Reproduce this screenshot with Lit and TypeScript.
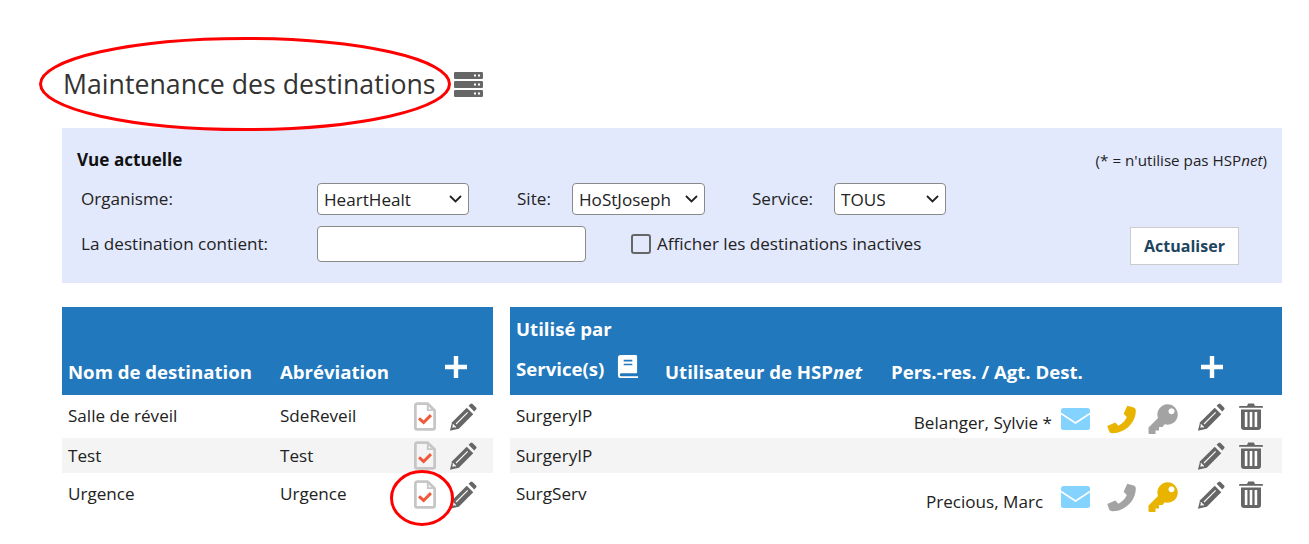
import { LitElement, html, css, svg } from "lit";
import { customElement } from "lit/decorators.js";

const gray = "#666666";
const lite = "#a3a3a3";
const gold = "#e8b400";

const pencil = html`<svg class="ic pencil" viewBox="0 0 30 30">
  <path fill="${gray}" d="M21 3l2-2a1.6 1.6 0 0 1 2.2 0l3.8 3.8a1.6 1.6 0 0 1 0 2.2l-2 2z"/>
  <path fill="${gray}" d="M19 5l7 7L10.500 27.500 1 29.800 3.300 20.500z"/>
  <path stroke="#fff" stroke-width="1.200" fill="none" d="M7.500 22.500L20 10M4 23l3.200 3.200"/>
  <path fill="#fff" d="M4.300 23.200l2.600 2.600-3.400.8z"/>
</svg>`;
const trash = html`<svg class="ic trash" viewBox="0 0 24 27">
  <path fill="${gray}" d="M8 3l1.200-2.400h5.600L16 3h7a1 1 0 0 1 1 1v.8H0V4a1 1 0 0 1 1-1z"/>
  <path fill="${gray}" d="M2 6.500h20V24a3 3 0 0 1-3 3H5a3 3 0 0 1-3-3z"/>
  <path fill="#fff" d="M5.800 9h2.600v15H5.800zM10.700 9h2.600v15h-2.600zM15.600 9h2.600v15h-2.600z"/>
</svg>`;
const mail = html`<svg class="ic mail" viewBox="0 0 29 22">
  <rect width="29" height="22" rx="2.500" fill="#84d3ff"/>
  <path d="M0 5.500L14.500 15 29 5.500" fill="none" stroke="#fff" stroke-width="1.500"/>
</svg>`;
const phone = (c: string) => html`<svg class="ic phone" viewBox="0 0 30 30">
  <path fill="${c}" d="M21 .8l6.500 1.700c1.500.4 2.300 1.700 2.300 3.300C29.800 18.500 18.800 29.200 6 29.200c-2 0-3.400-.6-3.900-2.200L.3 21.800 8.500 18l3.300 3.400c4-1.900 7-5 8.700-9L17.200 9z"/>
</svg>`;
const key = (c: string) => html`<svg class="ic key" viewBox="0 0 30 30">
  <path fill="${c}" fill-rule="evenodd" d="M19.500.3a10.200 10.200 0 1 1-2.800 20L14.500 23H11v3.500H7.500V30H1.500a1 1 0 0 1-1-1v-5.500L10 14A10.200 10.200 0 0 1 19.500.3zM23.500 4.200a3 3 0 1 0 .01 0z"/>
</svg>`;
const doc = html`<svg class="ic doc" viewBox="0 0 24 31">
  <path fill="none" stroke="#c6c6c6" stroke-width="3" stroke-linejoin="round" d="M3.500 1.500h11.500l7.500 7.500v18.500a2 2 0 0 1-2 2h-17a2 2 0 0 1-2-2v-24a2 2 0 0 1 2-2z"/>
  <path fill="#c6c6c6" d="M14 1.500h2v6h6v2h-8z"/>
  <path fill="none" stroke="#f0583a" stroke-width="3.200" d="M5.500 17.500l5 4.500 8-8"/>
</svg>`;
const server = html`<svg class="server" viewBox="0 0 29 25">
  ${[0, 9, 18].map(
    (y) => svg`<rect y="${y}" width="29" height="7" rx="1.200" fill="${gray}"/>
    <rect x="20" y="${y + 2.5}" width="2" height="2" fill="#fff"/><rect x="24" y="${y + 2.5}" width="2" height="2" fill="#fff"/>`
  )}
</svg>`;
const book = html`<svg class="book" viewBox="0 0 21 24">
  <path fill="#fff" d="M3 0h15.500a1.500 1.500 0 0 1 1.500 1.500V18a1 1 0 0 1-1 1H3.500a1.600 1.600 0 0 0 0 3.200H21V24H3a3 3 0 0 1-3-3V3a3 3 0 0 1 3-3z"/>
  <path fill="#2178bc" d="M6 5h9v1.800H6zM6 9h9v1.800H6z"/>
</svg>`;
const chev = html`<svg class="chev" viewBox="0 0 13 8"><path d="M1 1l5.500 5.500L12 1" fill="none" stroke="#222" stroke-width="1.800"/></svg>`;

@customElement("app-root")
export class AppRoot extends LitElement {
  static styles = css`
    :host {
      display: block;
      position: relative;
      width: 1309px;
      height: 544px;
      overflow: hidden;
      background: #fff;
      font-family: "Open Sans", sans-serif;
      font-size: 17.100px;
      color: #222;
      box-sizing: border-box;
      padding: 62px 27px 0 62px;
    }
    .title {
      display: flex;
      align-items: center;
      height: 45px;
      margin: 0 0 21px 1px;
    }
    h1 {
      margin: -1px 0 0;
      font-size: 26.700px;
      font-weight: 400;
      color: #333;
      line-height: 44px;
    }
    .server { width: 29px; height: 25px; margin: -1px 0 0 18px; }
    .panel {
      background: #e3e9fd;
      height: 155px;
      box-sizing: border-box;
      padding: 20px 15px 0;
      margin-bottom: 24px;
    }
    .head {
      display: flex;
      justify-content: space-between;
      align-items: center;
      height: 23px;
      margin-bottom: 12px;
    }
    .head b { font-size: 17.100px; color: #111; }
    .note { font-size: 15.200px; color: #222; }
    .row { display: flex; align-items: center; padding-left: 4px; }
    .r1 { height: 32px; margin-bottom: 11px; }
    .r2 { height: 36px; }
    .lab0 { width: 236px; margin-top: -1px; }
    .site { margin-left: 48px; width: 55px; margin-top: -1px; }
    .svc { margin-left: 47px; width: 82px; margin-top: -1px; }
    .sel { position: relative; display: block; height: 32px; flex: none; }
    .chev { position: absolute; right: 7px; top: 12px; width: 13px; height: 8px; }
    select {
      appearance: none;
      display: block;
      width: 100%;
      font: inherit;
      height: 32px;
      background: #fff;
      color: #222;
      border: 1px solid #8a8a8a;
      border-radius: 4px;
      padding: 0 6px;
      box-sizing: border-box;
    }
    .s1 { width: 152px; }
    .s2 { width: 133px; }
    .s3 { width: 112px; }
    .txt {
      width: 269px;
      height: 36px;
      box-sizing: border-box;
      background: #fff;
      border: 1px solid #8a8a8a;
      border-radius: 4px;
      padding: 0;
      margin: 0;
    }
    .chk {
      appearance: none;
      width: 20px;
      height: 20px;
      margin: 0 6px 0 45px;
      box-sizing: border-box;
      border: 2px solid #666;
      border-radius: 3px;
      background: transparent;
      flex: none;
    }
    .chklab { margin-top: -1px; }
    .btn {
      align-self: flex-start;
      margin: 1px 28px 0 auto;
      width: 109px;
      height: 38px;
      box-sizing: border-box;
      background: #fff;
      border: 1px solid #ccc;
      font: inherit;
      font-size: 16px;
      font-weight: 700;
      color: #1d4560;
    }
    .tables { display: flex; gap: 17px; }
    .left { width: 431px; }
    .right { width: 772px; }
    .band {
      background: #2178bc;
      color: #fff;
      height: 88px;
      box-sizing: border-box;
      font-weight: 700;
      font-size: 18.600px;
      line-height: 25px;
      position: relative;
    }
    .grid-l {
      display: grid;
      grid-template-columns: 212px 130px 1fr;
      padding: 0 0 11px 6px;
      align-items: end;
    }
    .plus { display: block; width: 22px; height: 22px; margin: 0 0 6px 35px; }
    .plus svg { display: block; width: 22px; height: 22px; }
    .right .band { display: flex; flex-direction: column; padding: 9px 6px 0; }
    .cols {
      display: flex;
      align-items: flex-start;
      margin-top: 11px;
      height: 36px;
    }
    .cols .a { width: 149px; flex: none; display: flex; align-items: flex-start; gap: 13px; }
    .cols .a span { margin-top: 4px; }
    .cols .b { width: 226px; flex: none; margin-top: 7px; }
    .cols .c { width: 299px; flex: none; margin-top: 7px; }
    .cols .plus { margin: 4px 0 0 11px; }
    .book { width: 22px; height: 23px; margin-top: 3px; }
    em { font-style: italic; }
    .tr { display: grid; align-items: start; padding-top: 9px; box-sizing: border-box; line-height: 24px; }
    .h1 { height: 43px; }
    .h2 { height: 35px; padding-top: 5px; background: #f4f4f4; }
    .h2 > span { margin-top: 1px; }
    .h3 { height: 43px; }
    .left .tr { grid-template-columns: 212px 134px 35px 1fr; padding-left: 6px; }
    .right .tr { grid-template-columns: 150px 386px 1fr; padding-left: 6px; }
    .who { text-align: right; padding-top: 7px; }
    .h3 .who { padding-top: 8px; }
    .acts { display: flex; padding-left: 9px; }
    .ic { display: block; flex: none; }
    .doc { width: 22px; height: 29px; margin-top: -2px; }
    .pencil { width: 28px; height: 28px; margin-top: -1px; }
    .mail { width: 29px; height: 22px; margin-top: 4px; }
    .phone { width: 29px; height: 29px; margin: 1px 0 0 17px; }
    .key { width: 30px; height: 30px; margin: 0 0 0 12px; }
    .acts .pencil { margin-left: 19px; }
    .acts .trash { width: 24px; height: 27px; margin-left: 14px; margin-top: -1px; }
    .acts.only .pencil { margin-left: 136px; }
    .mark { position: absolute; left: 0; top: 0; width: 1309px; height: 544px; pointer-events: none; }
  `;

  plus() {
    return html`<span class="plus"><svg viewBox="0 0 22 22"><path fill="#fff" d="M8.800 0h4.400v8.800H22v4.400h-8.800V22H8.800v-8.800H0V8.800h8.800z"/></svg></span>`;
  }

  render() {
    return html`
      <div class="title"><h1>Maintenance des destinations</h1>${server}</div>
      <section class="panel">
        <div class="head"><b>Vue actuelle</b><span class="note">(* = n'utilise pas HSP<em>net</em>)</span></div>
        <div class="row r1">
          <span class="lab0">Organisme:</span>
          <span class="sel s1"><select><option>HeartHealt</option></select>${chev}</span>
          <span class="site">Site:</span>
          <span class="sel s2"><select><option>HoStJoseph</option></select>${chev}</span>
          <span class="svc">Service:</span>
          <span class="sel s3"><select><option>TOUS</option></select>${chev}</span>
        </div>
        <div class="row r2">
          <span class="lab0">La destination contient:</span>
          <input class="txt" type="text" />
          <input class="chk" type="checkbox" />
          <span class="chklab">Afficher les destinations inactives</span>
          <button class="btn">Actualiser</button>
        </div>
      </section>
      <div class="tables">
        <div class="left">
          <div class="band grid-l">
            <span>Nom de destination</span><span>Abréviation</span>${this.plus()}
          </div>
          <div class="tr h1"><span>Salle de réveil</span><span>SdeReveil</span>${doc}${pencil}</div>
          <div class="tr h2"><span>Test</span><span>Test</span>${doc}${pencil}</div>
          <div class="tr h3"><span>Urgence</span><span>Urgence</span>${doc}${pencil}</div>
        </div>
        <div class="right">
          <div class="band">
            <div>Utilisé par</div>
            <div class="cols">
              <div class="a"><span>Service(s)</span>${book}</div>
              <div class="b">Utilisateur de HSP<em>net</em></div>
              <div class="c">Pers.-res. / Agt. Dest.</div>
              ${this.plus()}
            </div>
          </div>
          <div class="tr h1">
            <span>SurgeryIP</span><span class="who">Belanger, Sylvie *</span>
            <div class="acts">${mail}${phone(gold)}${key(lite)}${pencil}${trash}</div>
          </div>
          <div class="tr h2">
            <span>SurgeryIP</span><span></span>
            <div class="acts only">${pencil}${trash}</div>
          </div>
          <div class="tr h3">
            <span>SurgServ</span><span class="who">Precious, Marc&nbsp;&nbsp;</span>
            <div class="acts">${mail}${phone(lite)}${key(gold)}${pencil}${trash}</div>
          </div>
        </div>
      </div>
      <svg class="mark" viewBox="0 0 1309 544" fill="none" stroke="#f00" stroke-width="3">
        <ellipse cx="245" cy="84" rx="204.500" ry="45.500"/>
        <ellipse cx="422" cy="498" rx="30.500" ry="26.500"/>
      </svg>
    `;
  }
}
